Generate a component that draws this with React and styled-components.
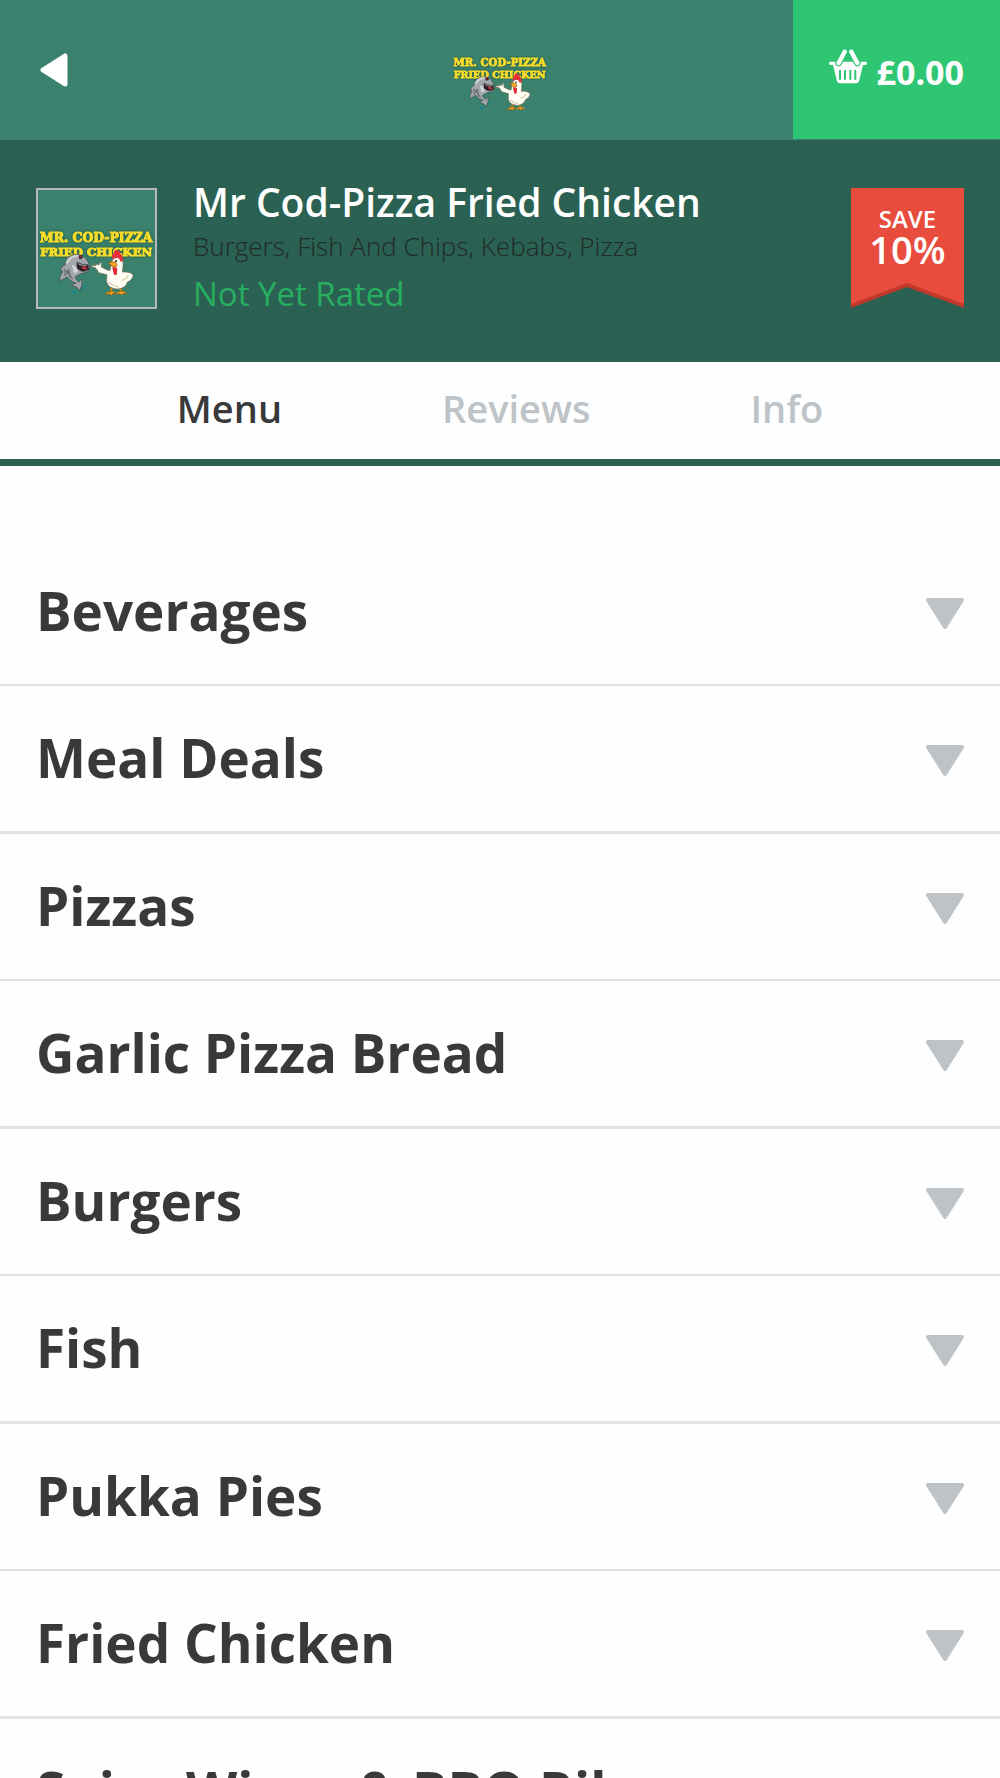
import React, { useState } from "react";
import styled, { createGlobalStyle } from "styled-components";

const GlobalStyle = createGlobalStyle`
  * {
    box-sizing: border-box;
  }

  body {
    margin: 0;
    background: #fefefe;
    color: #39393b;
    font-family: "Open Sans", "Noto Sans", sans-serif;
  }

  button {
    border: 0;
    padding: 0;
    background: none;
    color: inherit;
    font-family: inherit;
    cursor: pointer;
  }
`

const Page = styled.div`
  height: 100vh;
  overflow: hidden;
`

const TopBar = styled.header`
  display: grid;
  grid-template-columns: 1fr auto 1fr;
  height: 140px;
  background: #3a826e;
`

const BackButton = styled.button`
  display: flex;
  align-items: center;
  justify-self: start;
  padding: 0 40px;
`

const HomeLink = styled.a`
  display: flex;
  align-items: center;
  padding-top: 4px;
`

const BasketButton = styled.button`
  display: flex;
  align-items: center;
  justify-self: end;
  gap: 10px;
  padding: 4px 36px 0;
  border-bottom: 1px solid #3a826e;
  background: #2fc673;
  color: #fff;
  font-size: 34px;
  font-weight: 700;

  svg {
    margin-bottom: 10px;
  }
`

const Store = styled.section`
  display: flex;
  align-items: flex-start;
  height: 222px;
  padding: 48px 36px 0;
  background: #2a6152;
`

const LogoCard = styled.div`
  display: flex;
  flex: none;
  margin-right: 36px;
  border: 2px solid #b5b9bf;
  background: #3a826e;
`

const StoreDetails = styled.div`
  flex: 1;
`

const StoreName = styled.h1`
  margin: -10px 0 0;
  color: #fff;
  font-size: 39px;
  font-weight: 600;
  line-height: 48px;
`

const Cuisines = styled.p`
  margin: 2px 0 0;
  color: #212b28;
  font-size: 26px;
  font-weight: 300;
  line-height: 36px;
`

const Rating = styled.p`
  margin: 6px 0 0;
  color: #27ae60;
  font-size: 33px;
  line-height: 48px;
`

const Ribbon = styled.div`
  display: grid;
  flex: none;

  > * {
    grid-area: 1 / 1;
  }
`

const RibbonText = styled.div`
  padding-top: 16px;
  color: #fff;
  font-size: 38px;
  font-weight: 600;
  line-height: 30px;
  text-align: center;

  small {
    display: block;
    font-size: 24px;
  }
`

const Tabs = styled.nav`
  display: flex;
  justify-content: center;
  gap: 16%;
  height: 104px;
  padding-bottom: 6px;
  border-bottom: 7px solid #2a6152;
`

const Tab = styled.button`
  && {
    color: ${(props) => (props.$active ? "#39393b" : "#bdc3c7")};
  }
  font-size: 38px;
  font-weight: 600;
`

const MenuList = styled.ul`
  margin: 0;
  padding: 73px 0 0;
  list-style: none;
`

const MenuRow = styled.li`
  border-bottom: 2px solid #e2e2e3;

  &:nth-child(even) {
    border-bottom-width: 3px;
  }
`

const CategoryButton = styled.button`
  display: flex;
  align-items: center;
  justify-content: space-between;
  width: 100%;
  height: 145px;
  && {
    padding: 0 36px 2px;
  }
  font-size: 53px;
  font-weight: 700;
  text-align: left;

  svg {
    margin-top: 6px;
  }
`

const categories = [
  "Beverages",
  "Meal Deals",
  "Pizzas",
  "Garlic Pizza Bread",
  "Burgers",
  "Fish",
  "Pukka Pies",
  "Fried Chicken",
  "Spicy Wings & BBQ Ribs",
];

const BackIcon = () => (
  <svg width="28" height="34" viewBox="0 0 28 34" aria-hidden="true">
    <path d="M3 17 25 3v28z" fill="#fff" stroke="#fff" strokeWidth="5" strokeLinejoin="round" />
  </svg>
);

const DownIcon = () => (
  <svg width="38" height="32" viewBox="0 0 38 32" aria-hidden="true">
    <path d="M2 2h34L19 29z" fill="#bdc3c7" stroke="#bdc3c7" strokeWidth="4" strokeLinejoin="round" />
  </svg>
);

const BasketIcon = () => (
  <svg width="38" height="35" viewBox="0 0 114 105" aria-hidden="true">
    <path
      d="M4 38h19q4 9 12 5l7-5h30l7 5q8 4 12-5h19q4 0 4 5t-4 5h-8l-12 49q-2 6-8 6H32q-6 0-8-6L12 48H4q-4 0-4-5t4-5z"
      fill="#fff"
    />
    <path d="M47 8 29 42M67 8l18 34" stroke="#2fc673" strokeWidth="20" strokeLinecap="round" />
    <path d="M47 8 29 42M67 8l18 34" stroke="#fff" strokeWidth="13" strokeLinecap="round" />
    <path d="M33 65v25M48 65v25M64 65v25M79 65v25" stroke="#2fc673" strokeWidth="6" strokeLinecap="round" />
  </svg>
);

const Logo = ({ size }) => (
  <svg width={size} height={size} viewBox="42 48 348 348" role="img" aria-label="Mr. Cod-Pizza Fried Chicken">
    <g
      fill="#f8dc2c"
      stroke="#f8dc2c"
      strokeWidth="3"
      fontFamily="'DejaVu Serif', serif"
      fontWeight="700"
      textAnchor="middle"
      filter="drop-shadow(0 0 4px #1d5238)"
    >
      <text x="215" y="202" fontSize="37">MR. COD-PIZZA</text>
      <text x="215" y="244" fontSize="35">FRIED CHICKEN</text>
    </g>

    {/* fish */}
    <path d="M142 352q10-12 16 0l-12 6zM168 344l8-12 2 12zM178 334l8-6-4 12z" fill="#15868c" />
    <g stroke="#3a4044" strokeWidth="2" strokeLinejoin="round">
      <path
        d="M163 240q26 4 34 38l-8 14q-26 6-36 14 0 8 10 16l10-9q2 16-7 36-4-14-24-16 7-9 14-8-18-4-27-19l-21 13q-4-16 7-28-8-2-3-14l10-6q2-34 41-31z"
        fill="#a3a6aa"
      />
      <path d="M158 263q18 9 33 7l3 14q-20 14-36-4z" fill="#2c1d20" />
      <path d="M134 282q-6 20 12 32M118 284l14 8-12 12" fill="#85898e" />
    </g>
    <path d="M128 264q10-18 30-20" fill="none" stroke="#cfd1d3" strokeWidth="7" strokeLinecap="round" />
    <path d="M143 270l6 25 12-2-7-18z" fill="#d5d6d8" />
    <path d="M170 279q10-7 20 3-10 6-20-3z" fill="#c93542" />
    <path d="M162 266l5 6 4-3 4 5 4-3 4 4 4-4" fill="none" stroke="#fff" strokeWidth="2" />
    <circle cx="169" cy="247" r="6" fill="#231a1c" />
    <circle cx="168" cy="246" r="3" fill="#d72937" />

    {/* chicken */}
    <path d="M263 332l-5 20M288 330v20" stroke="#dd8a12" strokeWidth="5" />
    <path
      d="M242 358q5-8 15-7 10-5 16 4l-9 1-3 6-5-5zM272 358q6-9 16-8 12-4 19 7l-12-2-3 6-6-5z"
      fill="#f6a91d"
      stroke="#9a5a12"
      strokeWidth="2"
    />
    <path
      d="M262 260q6-15 21-11 14 5 12 24l-2 19q24-2 32 9-1 14-17 21-4 17-28 21-29-2-34-22l1-21-24-6-10-15-12-3 2-4 12 1-4-6 12 4 5-7 3 1-1 12 4 2q14 8 22 9z"
      fill="#fffdf4"
      stroke="#75664f"
      strokeWidth="2"
      strokeLinejoin="round"
    />
    <path d="M310 302q-6 14-20 14M252 322q12 12 30 14" fill="none" stroke="#dccdae" strokeWidth="4" />
    <path d="M264 254q-5-17 4-17 0-14 10-9 10 0 9 11 8 2 5 9 8 8-4 14-5-14-14-12z" fill="#e6313b" />
    <path d="M263 279q12-5 15 4l-2 17q-8 3-9-4z" fill="#df2b35" />
    <path d="M252 267q8-9 22-3l4 9-13 5-3-5z" fill="#f6a91d" stroke="#8d4b10" strokeWidth="2" />
    <circle cx="274" cy="259" r="3" fill="#27221e" />
  </svg>
);

const App = () => {
  const [activeTab, setActiveTab] = useState("Menu");

  return (
    <Page>
      <GlobalStyle />
      <TopBar>
        <BackButton type="button" aria-label="Back">
          <BackIcon />
        </BackButton>
        <HomeLink href="#home">
          <Logo size={96} />
        </HomeLink>
        <BasketButton type="button">
          <BasketIcon />
          £0.00
        </BasketButton>
      </TopBar>
      <Store>
        <LogoCard>
          <Logo size={117} />
        </LogoCard>
        <StoreDetails>
          <StoreName>Mr Cod-Pizza Fried Chicken</StoreName>
          <Cuisines>Burgers, Fish And Chips, Kebabs, Pizza</Cuisines>
          <Rating>Not Yet Rated</Rating>
        </StoreDetails>
        <Ribbon>
          <svg width="113" height="120" viewBox="0 0 113 120" aria-hidden="true">
            <path d="M0 0h113v120L56 99 0 120z" fill="#c0392b" />
            <path d="M0 0h113v116L56 95 0 116z" fill="#e84c3d" />
          </svg>
          <RibbonText>
            <small>SAVE</small>
            10%
          </RibbonText>
        </Ribbon>
      </Store>
      <Tabs>
        {["Menu", "Reviews", "Info"].map((tab) => (
          <Tab key={tab} type="button" $active={tab === activeTab} onClick={() => setActiveTab(tab)}>
            {tab}
          </Tab>
        ))}
      </Tabs>
      <MenuList>
        {categories.map((category) => (
          <MenuRow key={category}>
            <CategoryButton type="button">
              {category}
              <DownIcon />
            </CategoryButton>
          </MenuRow>
        ))}
      </MenuList>
    </Page>
  );
};

export default App;
